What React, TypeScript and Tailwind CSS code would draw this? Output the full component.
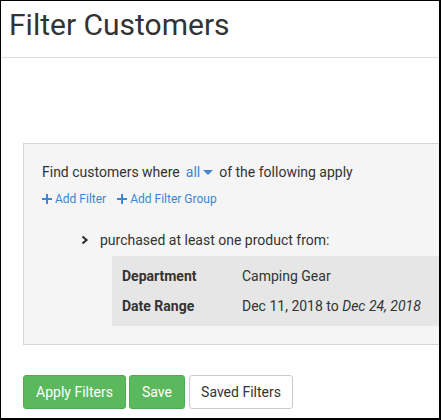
import React from "react";

export default function App() {
  return (
    <div
      className="w-[441px] h-[420px] border border-black border-b-2 border-r-2 bg-white overflow-hidden box-border text-[#333]"
      style={{ fontFamily: "Roboto, 'Liberation Sans', sans-serif" }}
    >
      <div className="h-[57px] border-b border-[#ddd] pl-[8px] pt-[4px]">
        <h1 className="text-[30px] leading-[40px] font-normal text-[#333]">Filter Customers</h1>
      </div>
      <div className="pl-[22px] pt-[85px]">
        <div className="w-[440px] h-[202px] bg-[#f5f5f5] border border-[#d6d6d6] pt-[16px] pl-[18px]">
          <div className="flex items-center text-[14px] leading-[24px]">
            <span>Find customers where</span>
            <span className="ml-[6px] text-[#3b87d4] flex items-center">
              all
              <svg width="10" height="6" viewBox="0 0 10 6" className="ml-[3px] mt-[1px]">
                <path d="M0 0 L10 0 L5 5 Z" fill="#3b87d4" />
              </svg>
            </span>
            <span className="ml-[6px]">of the following apply</span>
          </div>
          <div className="flex items-center text-[12px] leading-[16px] text-[#3b87d4] mt-[7px]">
            <span className="flex items-center">
              <svg width="10" height="10" viewBox="0 0 10 10" className="mr-[3px]">
                <path d="M5 0 V10 M0 5 H10" stroke="#3b87d4" strokeWidth="2" />
              </svg>
              Add Filter
            </span>
            <span className="flex items-center ml-[11px]">
              <svg width="10" height="10" viewBox="0 0 10 10" className="mr-[3px]">
                <path d="M5 0 V10 M0 5 H10" stroke="#3b87d4" strokeWidth="2" />
              </svg>
              Add Filter Group
            </span>
          </div>
          <div className="flex items-center text-[14px] leading-[20px] mt-[23px] pl-[39px]">
            <svg width="8" height="10" viewBox="0 0 8 10" className="mr-[11px]">
              <path d="M1.5 1.5 L5.5 5 L1.5 8.5" stroke="#333" strokeWidth="2.2" fill="none" />
            </svg>
            <span>purchased at least one product from:</span>
          </div>
          <div className="ml-[70px] mt-[6px] bg-[#e6e6e6] h-[70px] py-[5px] pl-[10px] text-[14px]">
            <div className="flex items-center h-[30px]">
              <span className="w-[120px] font-bold">Department</span>
              <span>Camping Gear</span>
            </div>
            <div className="flex items-center h-[30px]">
              <span className="w-[120px] font-bold">Date Range</span>
              <span>
                Dec 11, 2018 to <em>Dec 24, 2018</em>
              </span>
            </div>
          </div>
        </div>
        <div className="flex gap-[3px] mt-[30px] text-[14px]">
          <button className="h-[34px] w-[103px] bg-[#5cb85c] text-white rounded-[3px] border border-[#4cae4c]">
            Apply Filters
          </button>
          <button className="h-[34px] w-[56px] bg-[#5cb85c] text-white rounded-[3px] border border-[#4cae4c]">
            Save
          </button>
          <button className="h-[34px] w-[104px] bg-white text-[#333] rounded-[3px] border border-[#ccc] ml-[1px]">
            Saved Filters
          </button>
        </div>
      </div>
    </div>
  );
}
